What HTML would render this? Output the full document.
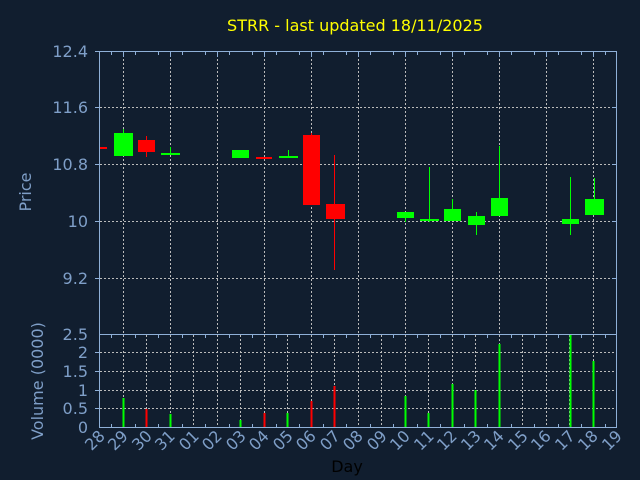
<!DOCTYPE html>
<html><head><meta charset="utf-8"><style>
html,body{margin:0;padding:0;background:#111e2f;}
svg{display:block;font-family:"DejaVu Sans","Liberation Sans",sans-serif;}
</style></head><body>
<svg width="640" height="480" viewBox="0 0 640 480" xmlns="http://www.w3.org/2000/svg">
<rect width="640" height="480" fill="#111e2f"/>
<text x="355" y="31" fill="#ffff00" font-size="16" text-anchor="middle">STRR - last updated 18/11/2025</text>
<g stroke="#bbbbbb" stroke-dasharray="2,2" stroke-width="1">
<line x1="100" y1="107.5" x2="617" y2="107.5"/>
<line x1="100" y1="164.5" x2="617" y2="164.5"/>
<line x1="100" y1="221.5" x2="617" y2="221.5"/>
<line x1="100" y1="278.5" x2="617" y2="278.5"/>
<line x1="123.5" y1="51" x2="123.5" y2="334"/>
<line x1="170.5" y1="51" x2="170.5" y2="334"/>
<line x1="217.5" y1="51" x2="217.5" y2="334"/>
<line x1="264.5" y1="51" x2="264.5" y2="334"/>
<line x1="311.5" y1="51" x2="311.5" y2="334"/>
<line x1="358.5" y1="51" x2="358.5" y2="334"/>
<line x1="405.5" y1="51" x2="405.5" y2="334"/>
<line x1="452.5" y1="51" x2="452.5" y2="334"/>
<line x1="499.5" y1="51" x2="499.5" y2="334"/>
<line x1="546.5" y1="51" x2="546.5" y2="334"/>
<line x1="593.5" y1="51" x2="593.5" y2="334"/>
<line x1="100" y1="352.5" x2="617" y2="352.5"/>
<line x1="100" y1="371.5" x2="617" y2="371.5"/>
<line x1="100" y1="390.5" x2="617" y2="390.5"/>
<line x1="100" y1="408.5" x2="617" y2="408.5"/>
<line x1="123.5" y1="335" x2="123.5" y2="427"/><line x1="146.5" y1="335" x2="146.5" y2="427"/><line x1="170.5" y1="335" x2="170.5" y2="427"/><line x1="193.5" y1="335" x2="193.5" y2="427"/><line x1="217.5" y1="335" x2="217.5" y2="427"/><line x1="240.5" y1="335" x2="240.5" y2="427"/><line x1="264.5" y1="335" x2="264.5" y2="427"/><line x1="287.5" y1="335" x2="287.5" y2="427"/><line x1="311.5" y1="335" x2="311.5" y2="427"/><line x1="334.5" y1="335" x2="334.5" y2="427"/><line x1="358.5" y1="335" x2="358.5" y2="427"/><line x1="381.5" y1="335" x2="381.5" y2="427"/><line x1="405.5" y1="335" x2="405.5" y2="427"/><line x1="428.5" y1="335" x2="428.5" y2="427"/><line x1="452.5" y1="335" x2="452.5" y2="427"/><line x1="475.5" y1="335" x2="475.5" y2="427"/><line x1="499.5" y1="335" x2="499.5" y2="427"/><line x1="522.5" y1="335" x2="522.5" y2="427"/><line x1="546.5" y1="335" x2="546.5" y2="427"/><line x1="569.5" y1="335" x2="569.5" y2="427"/><line x1="593.5" y1="335" x2="593.5" y2="427"/>
</g>
<g fill="#7f9fc8" font-size="16" text-anchor="end">
<text x="88" y="57">12.4</text><text x="88" y="113">11.6</text><text x="88" y="170">10.8</text><text x="88" y="227">10</text><text x="88" y="284">9.2</text>
<text x="88" y="340">2.5</text><text x="88" y="358">2</text><text x="88" y="377">1.5</text><text x="88" y="396">1</text><text x="88" y="414">0.5</text><text x="88" y="433">0</text>
</g>
<text transform="translate(31,192) rotate(-90)" fill="#7f9fc8" font-size="16" text-anchor="middle">Price</text>
<text transform="translate(43,381) rotate(-90)" fill="#7f9fc8" font-size="16" text-anchor="middle">Volume (0000)</text>
<text x="347" y="472" fill="#000" font-size="16" text-anchor="middle">Day</text>
<g fill="#ff0000" stroke="#ff0000" stroke-width="1">
<rect x="100" y="147" width="7" height="2" stroke="none"/>
<line x1="146.5" y1="136" x2="146.5" y2="157"/><rect x="138" y="140" width="17" height="12" stroke="none"/>
<rect x="256" y="157" width="16" height="2" stroke="none"/>
<line x1="311.5" y1="133" x2="311.5" y2="205"/><rect x="303" y="135" width="17" height="70" stroke="none"/>
<line x1="334.5" y1="155" x2="334.5" y2="270"/><rect x="326" y="204" width="19" height="15" stroke="none"/>
</g>
<g fill="#00ff00" stroke="#00ff00" stroke-width="1">
<line x1="123.5" y1="129" x2="123.5" y2="156"/><rect x="114" y="133" width="19" height="23" stroke="none"/>
<line x1="170.5" y1="147" x2="170.5" y2="155"/><rect x="161" y="153" width="19" height="2" stroke="none"/>
<rect x="232" y="150" width="17" height="8" stroke="none"/>
<line x1="288.5" y1="150" x2="288.5" y2="158"/><rect x="279" y="156" width="19" height="2" stroke="none"/>
<line x1="405.5" y1="212" x2="405.5" y2="222"/><rect x="397" y="212" width="17" height="6" stroke="none"/>
<line x1="429.5" y1="167" x2="429.5" y2="222"/><rect x="420" y="219" width="19" height="2" stroke="none"/>
<line x1="452.5" y1="199" x2="452.5" y2="221"/><rect x="444" y="209" width="17" height="12" stroke="none"/>
<line x1="476.5" y1="212" x2="476.5" y2="235"/><rect x="468" y="216" width="17" height="9" stroke="none"/>
<line x1="499.5" y1="146" x2="499.5" y2="216"/><rect x="491" y="198" width="17" height="18" stroke="none"/>
<line x1="570.5" y1="177" x2="570.5" y2="235"/><rect x="562" y="219" width="17" height="5" stroke="none"/>
<line x1="594.5" y1="178" x2="594.5" y2="215"/><rect x="585" y="199" width="19" height="16" stroke="none"/>
</g>
<g stroke-width="2">
<line x1="123.5" y1="427" x2="123.5" y2="398" stroke="#00ff00"/>
<line x1="146.5" y1="427" x2="146.5" y2="409" stroke="#ff0000"/>
<line x1="170.5" y1="427" x2="170.5" y2="414" stroke="#00ff00"/>
<line x1="240.5" y1="427" x2="240.5" y2="420" stroke="#00ff00"/>
<line x1="264.5" y1="427" x2="264.5" y2="413" stroke="#ff0000"/>
<line x1="287.5" y1="427" x2="287.5" y2="413" stroke="#00ff00"/>
<line x1="311.5" y1="427" x2="311.5" y2="401" stroke="#ff0000"/>
<line x1="334.5" y1="427" x2="334.5" y2="386" stroke="#ff0000"/>
<line x1="405.5" y1="427" x2="405.5" y2="396" stroke="#00ff00"/>
<line x1="428.5" y1="427" x2="428.5" y2="413" stroke="#00ff00"/>
<line x1="452.5" y1="427" x2="452.5" y2="384" stroke="#00ff00"/>
<line x1="475.5" y1="427" x2="475.5" y2="390" stroke="#00ff00"/>
<line x1="499.5" y1="427" x2="499.5" y2="344" stroke="#00ff00"/>
<line x1="570.5" y1="427" x2="570.5" y2="334" stroke="#00ff00"/>
<line x1="593.5" y1="427" x2="593.5" y2="361" stroke="#00ff00"/>
</g>
<g stroke="#8fb0d8" stroke-width="1" fill="none">
<rect x="99.5" y="51.5" width="517" height="283"/>
<rect x="99.5" y="334.5" width="517" height="93"/>
<path d="M111.5 51v4M135.5 51v4M158.5 51v4M182.5 51v4M205.5 51v4M229.5 51v4M252.5 51v4M276.5 51v4M299.5 51v4M323.5 51v4M346.5 51v4M370.5 51v4M393.5 51v4M417.5 51v4M440.5 51v4M464.5 51v4M487.5 51v4M511.5 51v4M534.5 51v4M558.5 51v4M581.5 51v4M605.5 51v4"/>
<path d="M123.5 51v6M170.5 51v6M217.5 51v6M264.5 51v6M311.5 51v6M358.5 51v6M405.5 51v6M452.5 51v6M499.5 51v6M546.5 51v6M593.5 51v6"/>
<path d="M111.5 335v3M135.5 335v3M158.5 335v3M182.5 335v3M205.5 335v3M229.5 335v3M252.5 335v3M276.5 335v3M299.5 335v3M323.5 335v3M346.5 335v3M370.5 335v3M393.5 335v3M417.5 335v3M440.5 335v3M464.5 335v3M487.5 335v3M511.5 335v3M534.5 335v3M558.5 335v3M581.5 335v3M605.5 335v3"/>
<path d="M111.5 427v-3M135.5 427v-3M158.5 427v-3M182.5 427v-3M205.5 427v-3M229.5 427v-3M252.5 427v-3M276.5 427v-3M299.5 427v-3M323.5 427v-3M346.5 427v-3M370.5 427v-3M393.5 427v-3M417.5 427v-3M440.5 427v-3M464.5 427v-3M487.5 427v-3M511.5 427v-3M534.5 427v-3M558.5 427v-3M581.5 427v-3M605.5 427v-3"/>
<path d="M95 51.5h5M95 107.5h5M95 164.5h5M95 221.5h5M95 278.5h5M95 352.5h5M95 371.5h5M95 390.5h5M95 408.5h5M612 107.5h5M612 164.5h5M612 221.5h5M612 278.5h5"/>
</g>
<g fill="#7f9fc8" font-size="16" text-anchor="end">
<text transform="translate(106,437) rotate(-45)">28</text>
<text transform="translate(129,437) rotate(-45)">29</text>
<text transform="translate(153,437) rotate(-45)">30</text>
<text transform="translate(176,437) rotate(-45)">31</text>
<text transform="translate(200,437) rotate(-45)">01</text>
<text transform="translate(223,437) rotate(-45)">02</text>
<text transform="translate(247,437) rotate(-45)">03</text>
<text transform="translate(270,437) rotate(-45)">04</text>
<text transform="translate(294,437) rotate(-45)">05</text>
<text transform="translate(317,437) rotate(-45)">06</text>
<text transform="translate(341,437) rotate(-45)">07</text>
<text transform="translate(364,437) rotate(-45)">08</text>
<text transform="translate(388,437) rotate(-45)">09</text>
<text transform="translate(411,437) rotate(-45)">10</text>
<text transform="translate(435,437) rotate(-45)">11</text>
<text transform="translate(458,437) rotate(-45)">12</text>
<text transform="translate(482,437) rotate(-45)">13</text>
<text transform="translate(505,437) rotate(-45)">14</text>
<text transform="translate(529,437) rotate(-45)">15</text>
<text transform="translate(552,437) rotate(-45)">16</text>
<text transform="translate(576,437) rotate(-45)">17</text>
<text transform="translate(599,437) rotate(-45)">18</text>
<text transform="translate(623,437) rotate(-45)">19</text>
</g>
</svg>
</body></html>
